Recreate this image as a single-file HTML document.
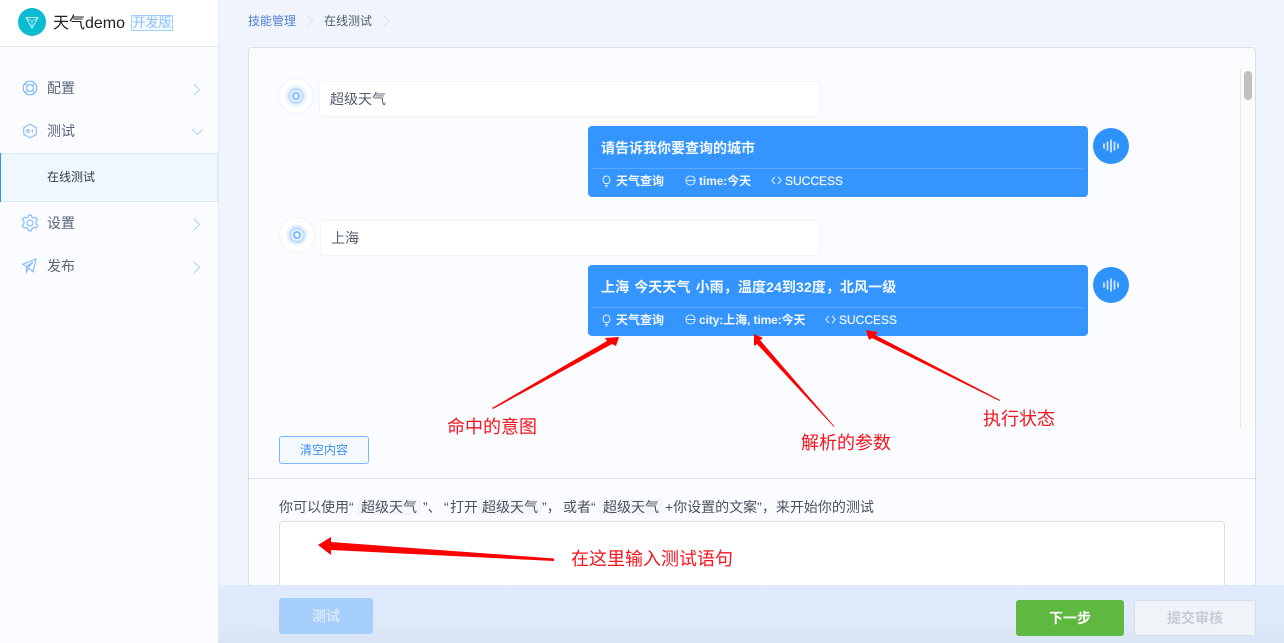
<!DOCTYPE html>
<html><head><meta charset="utf-8"><style>
*{box-sizing:border-box}
html,body{margin:0;padding:0;width:1284px;height:643px;overflow:hidden}
body{position:relative;background:#f0f5fd;font-family:"Liberation Sans","Noto Sans CJK SC",sans-serif;color:#4a5568}
.a{position:absolute;white-space:nowrap}
.msg{position:absolute;left:588px;width:500px;height:71px;background:#3595ff;border-radius:4px;color:#fff}
.msg .t{position:absolute;left:13px;top:13px;font-size:14px;line-height:18px;font-weight:bold;white-space:nowrap;color:#f4f9ff}
.msg .l{position:absolute;left:3px;right:4px;top:42px;height:1px;background:#5aa8ff}
.msg .s{position:absolute;top:46px;font-size:12px;line-height:18px;font-weight:bold;white-space:nowrap;color:#f0f7ff}
.bub{position:absolute;height:36px;background:#fff;border:1px solid #f2f4f7;border-radius:4px;font-size:14px;line-height:34px;padding-left:10px;color:#555d68}
.nav{position:absolute;left:47px;font-size:14px;line-height:20px;color:#5a6577}
.h{position:absolute;top:498px;font-size:14px;line-height:18px;color:#4a5360;white-space:nowrap}
.code{background:#f4f6f9;border-radius:3px;padding:0 4px;margin-left:-4px}
svg{position:absolute;overflow:visible}
.red{position:absolute;color:#f5141e;font-size:18px;line-height:24px;white-space:nowrap}
</style></head><body>
<!-- sidebar -->
<div class="a" style="left:0;top:0;width:219px;height:643px;background:#fafcff;border-right:1px solid #e4eaf3"></div>
<div class="a" style="left:0;top:0;width:218px;height:47px;background:#fff;border-bottom:1px solid #e6ebf2"></div>
<svg style="left:18px;top:8px" width="28" height="28" viewBox="0 0 28 28"><circle cx="14" cy="14" r="14" fill="#0cbcd0"/><path d="M8 9.5H20L14 20Z" fill="none" stroke="#a9e9f0" stroke-width="1.1"/><path d="M8 9.5L14 13.5L20 9.5M14 13.5V20" fill="none" stroke="#a9e9f0" stroke-width=".8"/></svg>
<div class="a" style="left:53px;top:13px;font-size:16px;line-height:22px;color:#222">天气demo</div>
<div class="a" style="left:131px;top:15px;width:42px;height:16px;border:1px solid #a3cdfb;border-radius:1px;background:#f5faff;color:#8abff9;font-size:13px;line-height:14px;text-align:center">开发版</div>

<svg style="left:22px;top:80px" width="16" height="16" viewBox="0 0 16 16" fill="none" stroke="#7db8fb" stroke-width="1.1"><circle cx="8" cy="8" r="6.8"/><circle cx="8" cy="8" r="3.4"/><path d="M3.2 3.2L5.6 5.6M12.8 3.2L10.4 5.6M3.2 12.8L5.6 10.4M12.8 12.8L10.4 10.4"/></svg>
<div class="nav" style="top:78px">配置</div>
<svg style="left:193px;top:83px" width="8" height="13" viewBox="0 0 8 13" fill="none" stroke="#a5cdfb" stroke-width=".9"><path d="M1 1L6.5 6.5L1 12"/></svg>

<svg style="left:22px;top:123px" width="16" height="16" viewBox="0 0 16 16" fill="none" stroke="#7db8fb" stroke-width="1.1"><path d="M8 1.2L14.2 4.6V11.4L8 14.8L1.8 11.4V4.6Z"/><circle cx="6" cy="8" r="1.3"/><path d="M10 6.6Q11 8 10 9.4"/></svg>
<div class="nav" style="top:121px">测试</div>
<svg style="left:191px;top:128px" width="13" height="8" viewBox="0 0 13 8" fill="none" stroke="#a5cdfb" stroke-width=".9"><path d="M1 1L6.5 6.5L12 1"/></svg>

<div class="a" style="left:0;top:153px;width:218px;height:49px;background:#f1f7fe;border-top:1px solid #dfe9f5;border-bottom:1px solid #dfe9f5;border-right:1px solid #dfe9f5"></div>
<div class="a" style="left:0;top:153px;width:1px;height:49px;background:#3595ff"></div>
<div class="a" style="left:47px;top:168px;font-size:12px;line-height:18px;color:#333b47">在线测试</div>

<svg style="left:21px;top:214px" width="18" height="18" viewBox="0 0 18 18" fill="none" stroke="#7db8fb" stroke-width="1.1"><path d="M7.5 1.2H10.5L11 3.4L12.8 4.2L14.8 3.2L16.6 5.6L15 7.2V9.6L16.8 11.4L15 14L12.9 13.4L11 14.6L10.5 16.8H7.5L7 14.6L5.1 13.4L3 14L1.2 11.4L3 9.6V7.2L1.4 5.6L3.2 3.2L5.2 4.2L7 3.4Z"/><circle cx="9" cy="9" r="3"/></svg>
<div class="nav" style="top:213px">设置</div>
<svg style="left:193px;top:218px" width="8" height="13" viewBox="0 0 8 13" fill="none" stroke="#a5cdfb" stroke-width=".9"><path d="M1 1L6.5 6.5L1 12"/></svg>

<svg style="left:22px;top:258px" width="15" height="15" viewBox="0 0 15 15" fill="none" stroke="#7db8fb" stroke-width="1.1"><path d="M14 1L.8 6.2L4.6 8.4L11 4.2L6 9.4L11 13.8Z"/><path d="M4.6 8.4V14L6.6 10.4"/></svg>
<div class="nav" style="top:256px">发布</div>
<svg style="left:193px;top:261px" width="8" height="13" viewBox="0 0 8 13" fill="none" stroke="#a5cdfb" stroke-width=".9"><path d="M1 1L6.5 6.5L1 12"/></svg>

<!-- breadcrumb -->
<div class="a" style="left:248px;top:12px;font-size:12px;line-height:18px;color:#4f7fd8">技能管理</div>
<svg style="left:307px;top:15px" width="7" height="12" viewBox="0 0 7 12" fill="none" stroke="#dfe4eb"><path d="M.5 1L6 6L.5 11"/></svg>
<div class="a" style="left:324px;top:12px;font-size:12px;line-height:18px;color:#555d68">在线测试</div>
<svg style="left:383px;top:15px" width="7" height="12" viewBox="0 0 7 12" fill="none" stroke="#dfe4eb"><path d="M.5 1L6 6L.5 11"/></svg>

<!-- card -->
<div class="a" style="left:248px;top:47px;width:1008px;height:610px;background:#fbfcff;border:1px solid #d8dfe9;border-radius:4px"></div>
<div class="a" style="left:1240px;top:68px;width:15px;height:360px;background:#fbfbfb;border-left:1px solid #e6e6e6"></div>
<div class="a" style="left:1244px;top:71px;width:8px;height:29px;background:#c1c1c1;border-radius:4px"></div>

<!-- avatars & chat -->
<svg style="left:278px;top:78px" width="36" height="36" viewBox="0 0 36 36"><circle cx="18" cy="18" r="17.5" fill="#fff" stroke="#f0f2f6"/><circle cx="18" cy="18" r="10.5" fill="#e8f2fe"/><circle cx="18" cy="18" r="8" fill="#bcdcfe"/><circle cx="18" cy="18" r="6" fill="#e4f0fe"/><circle cx="18" cy="18" r="3" fill="#fff" stroke="#6db0fb" stroke-width="1.6"/></svg>
<div class="bub" style="left:319px;top:81px;width:501px">超级天气</div>
<div class="msg" style="top:126px">
<div class="t">请告诉我你要查询的城市</div><div class="l"></div>
<svg style="left:14px;top:49px" width="9" height="13" viewBox="0 0 9 13" fill="none" stroke="#e6f1ff"><path d="M2.8 8.5C.2 6.5.6 1 4.5 1S8.8 6.5 6.2 8.5ZM3 10.5H6M3.6 12H5.4"/></svg>
<div class="s" style="left:28px">天气查询</div>
<svg style="left:97px;top:49px" width="11" height="11" viewBox="0 0 12 12" fill="none" stroke="#e6f1ff"><circle cx="6" cy="6" r="5"/><path d="M1.5 6H10.5"/></svg>
<div class="s" style="left:111px;letter-spacing:-.1px">time:今天</div>
<svg style="left:183px;top:50px" width="11" height="9" viewBox="0 0 11 9" fill="none" stroke="#e6f1ff"><path d="M4 .8L.8 4.5L4 8.2M7 .8L10.2 4.5L7 8.2"/></svg>
<div class="s" style="left:197px;font-weight:normal;-webkit-text-stroke:.2px #f0f7ff">SUCCESS</div>
</div>
<svg style="left:1093px;top:128px" width="36" height="36" viewBox="0 0 36 36"><circle cx="18" cy="18" r="18" fill="#2e92fb"/><path d="M11 15.5V20.5M14.5 13.5V22.5M18 11.5V24.5M21.5 13.5V22.5M25 15.5V20.5" stroke="#cfe4ff" stroke-width="1.8"/></svg>

<svg style="left:279px;top:217px" width="36" height="36" viewBox="0 0 36 36"><circle cx="18" cy="18" r="17.5" fill="#fff" stroke="#f0f2f6"/><circle cx="18" cy="18" r="10.5" fill="#e8f2fe"/><circle cx="18" cy="18" r="8" fill="#bcdcfe"/><circle cx="18" cy="18" r="6" fill="#e4f0fe"/><circle cx="18" cy="18" r="3" fill="#fff" stroke="#6db0fb" stroke-width="1.6"/></svg>
<div class="bub" style="left:320px;top:220px;width:500px">上海</div>
<div class="msg" style="top:265px">
<div class="t" style="letter-spacing:.1px;word-spacing:1px">上海 今天天气 小雨，温度24到32度，北风一级</div><div class="l"></div>
<svg style="left:14px;top:49px" width="9" height="13" viewBox="0 0 9 13" fill="none" stroke="#e6f1ff"><path d="M2.8 8.5C.2 6.5.6 1 4.5 1S8.8 6.5 6.2 8.5ZM3 10.5H6M3.6 12H5.4"/></svg>
<div class="s" style="left:28px">天气查询</div>
<svg style="left:97px;top:49px" width="11" height="11" viewBox="0 0 12 12" fill="none" stroke="#e6f1ff"><circle cx="6" cy="6" r="5"/><path d="M1.5 6H10.5"/></svg>
<div class="s" style="left:111px;letter-spacing:-.1px">city:上海, time:今天</div>
<svg style="left:237px;top:50px" width="11" height="9" viewBox="0 0 11 9" fill="none" stroke="#e6f1ff"><path d="M4 .8L.8 4.5L4 8.2M7 .8L10.2 4.5L7 8.2"/></svg>
<div class="s" style="left:251px;font-weight:normal;-webkit-text-stroke:.2px #f0f7ff">SUCCESS</div>
</div>
<svg style="left:1093px;top:267px" width="36" height="36" viewBox="0 0 36 36"><circle cx="18" cy="18" r="18" fill="#2e92fb"/><path d="M11 15.5V20.5M14.5 13.5V22.5M18 11.5V24.5M21.5 13.5V22.5M25 15.5V20.5" stroke="#cfe4ff" stroke-width="1.8"/></svg>

<!-- clear button -->
<div class="a" style="left:279px;top:436px;width:90px;height:28px;background:#f4f9ff;border:1px solid #7db8fb;border-radius:3px;color:#3f8fec;font-size:12px;line-height:27px;text-align:center">清空内容</div>
<div class="a" style="left:249px;top:478px;width:1006px;height:1px;background:#dde3ec"></div>

<!-- hint -->
<div class="h" style="left:279px">你可以使用“</div>
<div class="h" style="left:361px"><span class="code">超级天气</span></div>
<div class="h" style="left:423px">”、</div>
<div class="h" style="left:444px">“</div>
<div class="h" style="left:450px">打开</div>
<div class="h" style="left:482px"><span class="code">超级天气</span></div>
<div class="h" style="left:542px">”，</div>
<div class="h" style="left:563px">或者“</div>
<div class="h" style="left:603px"><span class="code">超级天气</span></div>
<div class="h" style="left:665px">+你设置的文案”，来开始你的测试</div>
<div class="a" style="left:279px;top:521px;width:946px;height:69px;background:#fff;border:1px solid #d8dfe9;border-radius:4px"></div>

<!-- bottom bar -->
<div class="a" style="left:219px;top:585px;width:1065px;height:58px;background:linear-gradient(#ddeafc 0%,#dde9fb 60%,#d6e3f4 100%);opacity:.93"></div>
<div class="a" style="left:279px;top:598px;width:94px;height:36px;background:#a6cffd;border-radius:3px;color:#d8e9fe;font-size:14px;font-weight:bold;line-height:36px;text-align:center">测试</div>
<div class="a" style="left:1016px;top:600px;width:108px;height:36px;background:#5fb940;border-radius:3px;color:#fff;font-size:14px;font-weight:bold;line-height:36px;text-align:center">下一步</div>
<div class="a" style="left:1134px;top:600px;width:122px;height:36px;background:#f0f3f8;border:1px solid #d6deea;border-radius:3px;color:#c6ccd5;font-size:14px;font-weight:bold;line-height:34px;text-align:center">提交审核</div>

<!-- annotations -->
<svg style="left:0;top:0" width="1284" height="643" viewBox="0 0 1284 643" fill="#fe0000">
<polygon points="492,408 607,341 605,338 619,337 616,346 612,344 493,409"/>
<polygon points="834.5,426.5 760,340 763,338 754,334 754,346 757,344 834,427"/>
<polygon points="1000,400 875,335 878,332 866,330 869,340 872,338 999.5,401"/>
<polygon points="554,558.5 331,542 331,537 318,545 331,555 331,550 554,561"/>
</svg>
<div class="red" style="left:447px;top:415px">命中的意图</div>
<div class="red" style="left:801px;top:431px">解析的参数</div>
<div class="red" style="left:983px;top:407px">执行状态</div>
<div class="red" style="left:571px;top:547px">在这里输入测试语句</div>
</body></html>
